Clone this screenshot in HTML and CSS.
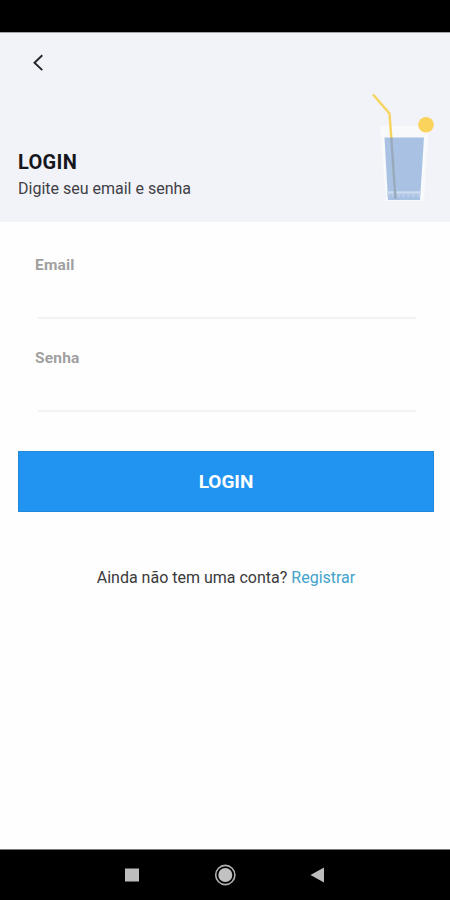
FILE: index.html
```html
<!DOCTYPE html>
<html lang="pt-BR">
<head>
    <meta charset="UTF-8">
    <meta name="viewport" content="width=device-width, initial-scale=1.0">
    <title>Login</title>
    <link rel="stylesheet" href="styles.css">
</head>
<body>
    <div class="status-bar"></div>

    <header class="header">
        <a href="#" class="back" aria-label="Voltar">
            <svg width="12" height="18" viewBox="0 0 12 18">
                <path d="M10.3 1.3 L2.5 8.7 L10.3 16.1" fill="none" stroke="#23242a" stroke-width="1.9"/>
            </svg>
        </a>
        <div class="title">
            <h1>LOGIN</h1>
            <p>Digite seu email e senha</p>
        </div>
        <svg class="drink" width="70" height="112" viewBox="0 0 70 112">
            <!-- glass -->
            <path d="M10 36 H59 L54 111 H16 Z" fill="#f7f9fb"/>
            <path d="M14.5 47.5 H54 L50 110 H18 Z" fill="#a9c2e4"/>
            <path d="M16.8 102.5 H51" stroke="#cbdaee" stroke-width="2.5"/>
            <path d="M17 105.5 H51" stroke="#bdcfe8" stroke-width="2" stroke-dasharray="3 2"/>
            <!-- straw -->
            <path d="M3 4.5 L19.5 23.5 L21.3 48" fill="none" stroke="#f6d35e" stroke-width="2.4"/>
            <path d="M21.3 47.5 L25.5 109" stroke="#99aabd" stroke-width="2.4"/>
            <circle cx="56" cy="34.7" r="7.8" fill="#f9d35c"/>
        </svg>
    </header>

    <main>
        <form class="login-form">
            <div class="field">
                <label for="email">Email</label>
                <input type="email" id="email">
            </div>
            <div class="field">
                <label for="senha">Senha</label>
                <input type="password" id="senha">
            </div>
            <button type="submit">LOGIN</button>
        </form>
        <p class="register">Ainda não tem uma conta? <a href="#">Registrar</a></p>
    </main>

    <nav class="nav-bar">
        <svg width="22" height="22" viewBox="0 0 22 22">
            <rect x="4" y="4.5" width="14" height="13" fill="#bdbdbd"/>
        </svg>
        <svg width="22" height="22" viewBox="0 0 22 22">
            <circle cx="11.3" cy="11" r="9.6" fill="none" stroke="#b0b0b0" stroke-width="1.6"/>
            <circle cx="11.3" cy="11" r="7" fill="#c2c2c2"/>
        </svg>
        <svg width="22" height="22" viewBox="0 0 22 22">
            <path d="M3.5 11 L17 3.5 V18.5 Z" fill="#bdbdbd"/>
        </svg>
    </nav>
</body>
</html>
```
FILE: styles.css
```css
:root {
    --blue: #2094f0;
    --header-bg: #f2f3f9;
}

* {
    box-sizing: border-box;
}

body {
    margin: 0;
    height: 900px;
    display: flex;
    flex-direction: column;
    background: #fefefe;
    font-family: Roboto, sans-serif;
    color: #16171c;
}

.status-bar {
    height: 33px;
    background: #000;
    border-bottom: 1px solid #a5a5a8;
}

.header {
    position: relative;
    height: 189px;
    padding: 21px 18px 0;
    background: var(--header-bg);
}

.back {
    display: block;
    width: 12px;
    height: 18px;
    margin-left: 14px;
}

.back svg {
    display: block;
}

.title {
    margin-top: 78px;
}

.title h1 {
    margin: 0;
    font-size: 20px;
    line-height: 24px;
    font-weight: 700;
    letter-spacing: 0.3px;
}

.title p {
    margin: 4px 0 0;
    font-size: 16px;
    line-height: 21px;
    color: #3f4045;
}

/* illustration sits over the right side of the header */
.drink {
    position: absolute;
    right: 10px;
    bottom: 20px;
}

main {
    flex: 1;
    padding: 33px 16px 0 18px;
}

.field {
    height: 93px;
    padding: 0 18px 0 17px;
}

.field label {
    display: block;
    font-size: 15.5px;
    line-height: 20px;
    font-weight: 700;
    letter-spacing: 0.2px;
    color: #a0a0a0;
}

.field input {
    display: block;
    width: calc(100% - 3px);
    height: 44px;
    margin-left: 3px;
    padding: 0 4px;
    border: none;
    border-bottom: 2px solid #f3f3f3;
    background: none;
    font-size: 16px;
    font-family: inherit;
    outline: none;
}

button {
    display: block;
    width: 100%;
    height: 61px;
    margin-top: 10px;
    padding-bottom: 2px;
    border: 1px solid #2388d8;
    background: var(--blue);
    color: #fff;
    font-family: inherit;
    font-size: 19px;
    font-weight: 700;
}

.register {
    margin: 56px 0 0;
    font-size: 16px;
    line-height: 20px;
    text-align: center;
    color: #3a3a3c;
}

.register a {
    color: #42a3cb;
    text-decoration: none;
}

.nav-bar {
    height: 51px;
    display: flex;
    justify-content: center;
    align-items: center;
    gap: 71px;
    background: #000;
    border-top: 1px solid #777;
}
```
